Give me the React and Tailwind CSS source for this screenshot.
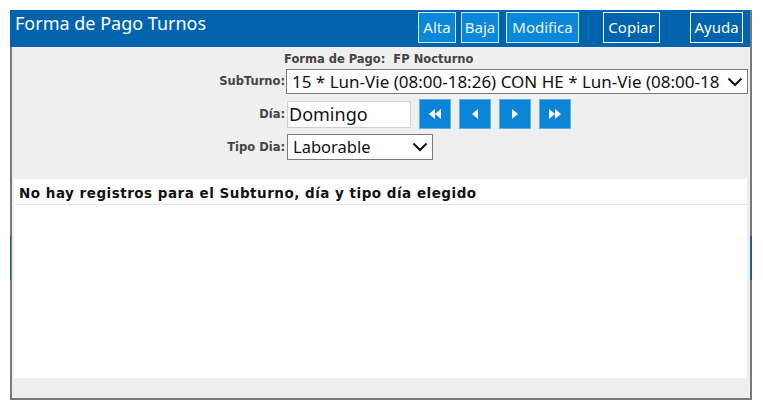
import React from "react";

const tahoma = { fontFamily: '"DejaVu Sans", Verdana, sans-serif' };
const segoe = { fontFamily: '"Noto Sans", "Open Sans", sans-serif' };

function Chevron() {
  return (
    <svg width="16" height="10" viewBox="0 0 16 10" className="shrink-0">
      <path d="M1.5 1.5 L8 8 L14.5 1.5" fill="none" stroke="#111" strokeWidth="2" />
    </svg>
  );
}

function NavBtn({ kind }) {
  let shape = null;
  if (kind === "first")
    shape = (
      <>
        <path d="M8 4 L2 9 L8 14 Z" fill="white" />
        <path d="M14 4 L8 9 L14 14 Z" fill="white" />
      </>
    );
  if (kind === "prev") shape = <path d="M11 4 L5 9 L11 14 Z" fill="white" />;
  if (kind === "next") shape = <path d="M5 4 L11 9 L5 14 Z" fill="white" />;
  if (kind === "last")
    shape = (
      <>
        <path d="M2 4 L8 9 L2 14 Z" fill="white" />
        <path d="M8 4 L14 9 L8 14 Z" fill="white" />
      </>
    );
  return (
    <div className="w-[32px] h-[30px] bg-[#0a84d6] border border-[#5fb1e6] flex items-center justify-center">
      <svg width="16" height="18" viewBox="0 0 16 18">{shape}</svg>
    </div>
  );
}

function TopBtn({ children, w, bright, className = "" }) {
  return (
    <div
      className={`h-[31px] ${w} flex items-center justify-center text-[15px] border ${
        bright ? "bg-[#0a87d8] border-[#cfe7f7] text-[#eaf5fc]" : "bg-[#0063ad] border-white text-white"
      } ${className}`}
      style={segoe}
    >
      {children}
    </div>
  );
}

export default function App() {
  return (
    <div className="w-[763px] h-[411px] bg-white pt-[10px] pl-[10px] relative overflow-hidden">
      <div className="w-[742px] h-[390px] border-r-2 border-[#7a7a7a] flex flex-col">
        {/* Title bar */}
        <div className="h-[37px] bg-[#0063ad] flex items-start pt-[2px] shrink-0">
          <div className="flex-1 pl-[5px] text-white text-[18px] leading-[22px]" style={segoe}>
            Forma de Pago Turnos
          </div>
          <TopBtn w="w-[38px]" bright>Alta</TopBtn>
          <TopBtn w="w-[38px]" bright className="ml-[5px]">Baja</TopBtn>
          <TopBtn w="w-[73px]" bright className="ml-[7px]">Modifica</TopBtn>
          <TopBtn w="w-[57px]" className="ml-[24px]">Copiar</TopBtn>
          <TopBtn w="w-[53px]" className="ml-[30px] mr-[7px]">Ayuda</TopBtn>
        </div>

        {/* Body */}
        <div className="flex-1 bg-[#efefef] border-l-2 border-b-2 border-[#7a7a7a] flex flex-col">
          <div
            className="mt-[4px] h-[16px] leading-[16px] pl-[272px] text-[11.5px] font-bold text-[#444] whitespace-nowrap"
            style={tahoma}
          >
            Forma de Pago:&nbsp; FP Nocturno
          </div>

          {/* SubTurno */}
          <div className="mt-[2px] h-[25px] flex items-center">
            <div className="w-[273px] pt-[1px] text-right text-[11.5px] font-bold text-[#444]" style={tahoma}>
              SubTurno:
            </div>
            <div
              className="ml-[1px] w-[462px] h-[25px] bg-white border border-[#7a7a7a] flex items-center pl-[5px] pr-[4px] text-[17px] text-[#111] whitespace-nowrap overflow-hidden"
              style={segoe}
            >
              <span className="flex-1 overflow-hidden">15 * Lun-Vie (08:00-18:26) CON HE * Lun-Vie (08:00-18</span>
              <Chevron />
            </div>
          </div>

          {/* Dia */}
          <div className="mt-[5px] h-[30px] flex items-center">
            <div className="w-[273px] pt-[2px] text-right text-[11.5px] font-bold text-[#444]" style={tahoma}>
              Día:
            </div>
            <div
              className="ml-[2px] w-[124px] h-[27px] bg-white border border-[#cfcfcf] flex items-center pl-[1px] text-[18px] text-[#111]"
              style={segoe}
            >
              Domingo
            </div>
            <div className="ml-[8px] flex gap-[8px]">
              <NavBtn kind="first" />
              <NavBtn kind="prev" />
              <NavBtn kind="next" />
              <NavBtn kind="last" />
            </div>
          </div>

          {/* Tipo Dia */}
          <div className="mt-[5px] h-[26px] flex items-center">
            <div className="w-[273px] pt-[2px] text-right text-[11.5px] font-bold text-[#444]" style={tahoma}>
              Tipo Dia:
            </div>
            <div
              className="ml-[2px] w-[146px] h-[26px] bg-white border border-[#7a7a7a] flex items-center pl-[5px] pr-[4px] text-[16.5px] text-[#111]"
              style={segoe}
            >
              <span className="flex-1">Laborable</span>
              <Chevron />
            </div>
          </div>

          {/* Results panel */}
          <div className="mt-[19px] ml-[2px] mr-[3px] h-[199px] bg-white flex flex-col">
            <div className="mt-[1px] h-[25px] pt-[2px] border-b border-[#e6e6e6] flex items-center pl-[5px]">
              <span className="text-[13.5px] tracking-[0.5px] font-bold text-[#111] whitespace-nowrap" style={tahoma}>
                No hay registros para el Subturno, día y tipo día elegido
              </span>
            </div>
          </div>
          <div className="flex-1" />
        </div>
      </div>

      {/* stray border highlights */}
      <div className="absolute left-[10px] top-[236px] w-[1px] h-[44px] bg-[#2a5a8a]" />
      <div className="absolute left-[750px] top-[236px] w-[2px] h-[44px] bg-[#2a5a8a]" />
    </div>
  );
}
